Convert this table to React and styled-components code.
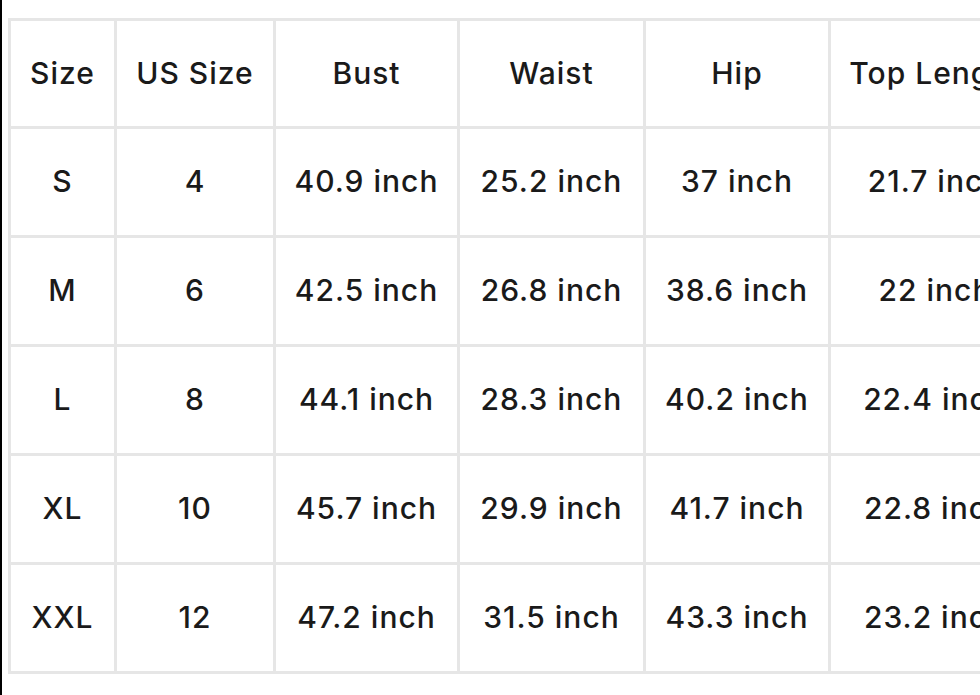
import React from "react";
import styled, { createGlobalStyle } from "styled-components";

const Global = createGlobalStyle`
  html, body { margin: 0; padding: 0; background: #ffffff; overflow: hidden; }
  body { width: 980px; height: 695px; }
`;

const Page = styled.div`
  box-sizing: border-box;
  width: 980px;
  height: 695px;
  border-left: 2px solid #000000;
  padding: 18px 0 0 6px;
  overflow: hidden;
  font-family: "Inter", "Liberation Sans", sans-serif;
  color: #1a1a1a;
`;

const Grid = styled.div`
  display: grid;
  grid-template-columns: 106px 159px 184px 186px 185px 211px;
  grid-auto-rows: 109px;
  grid-template-rows: 108px;
  width: max-content;
  border-top: 3px solid #e6e6e6;
  border-left: 3px solid #e6e6e6;
`;

const Cell = styled.div`
  box-sizing: border-box;
  display: flex;
  align-items: center;
  justify-content: center;
  padding-bottom: 2px;
  border-right: 3px solid #e6e6e6;
  border-bottom: 3px solid #e6e6e6;
  font-size: 30px;
  font-weight: 450;
  letter-spacing: 1px;
  white-space: nowrap;
  overflow: hidden;
`;

const headers = ["Size", "US Size", "Bust", "Waist", "Hip", "Top Length"];
const rows = [
  ["S", "4", "40.9 inch", "25.2 inch", "37 inch", "21.7 inch"],
  ["M", "6", "42.5 inch", "26.8 inch", "38.6 inch", "22 inch"],
  ["L", "8", "44.1 inch", "28.3 inch", "40.2 inch", "22.4 inch"],
  ["XL", "10", "45.7 inch", "29.9 inch", "41.7 inch", "22.8 inch"],
  ["XXL", "12", "47.2 inch", "31.5 inch", "43.3 inch", "23.2 inch"],
];

export default function App() {
  return (
    <>
      <Global />
      <Page>
        <Grid role="table">
          {headers.map((h) => (
            <Cell key={h} role="columnheader">{h}</Cell>
          ))}
          {rows.map((r) =>
            r.map((v, i) => (
              <Cell key={r[0] + i} role="cell">{v}</Cell>
            ))
          )}
        </Grid>
      </Page>
    </>
  );
}
